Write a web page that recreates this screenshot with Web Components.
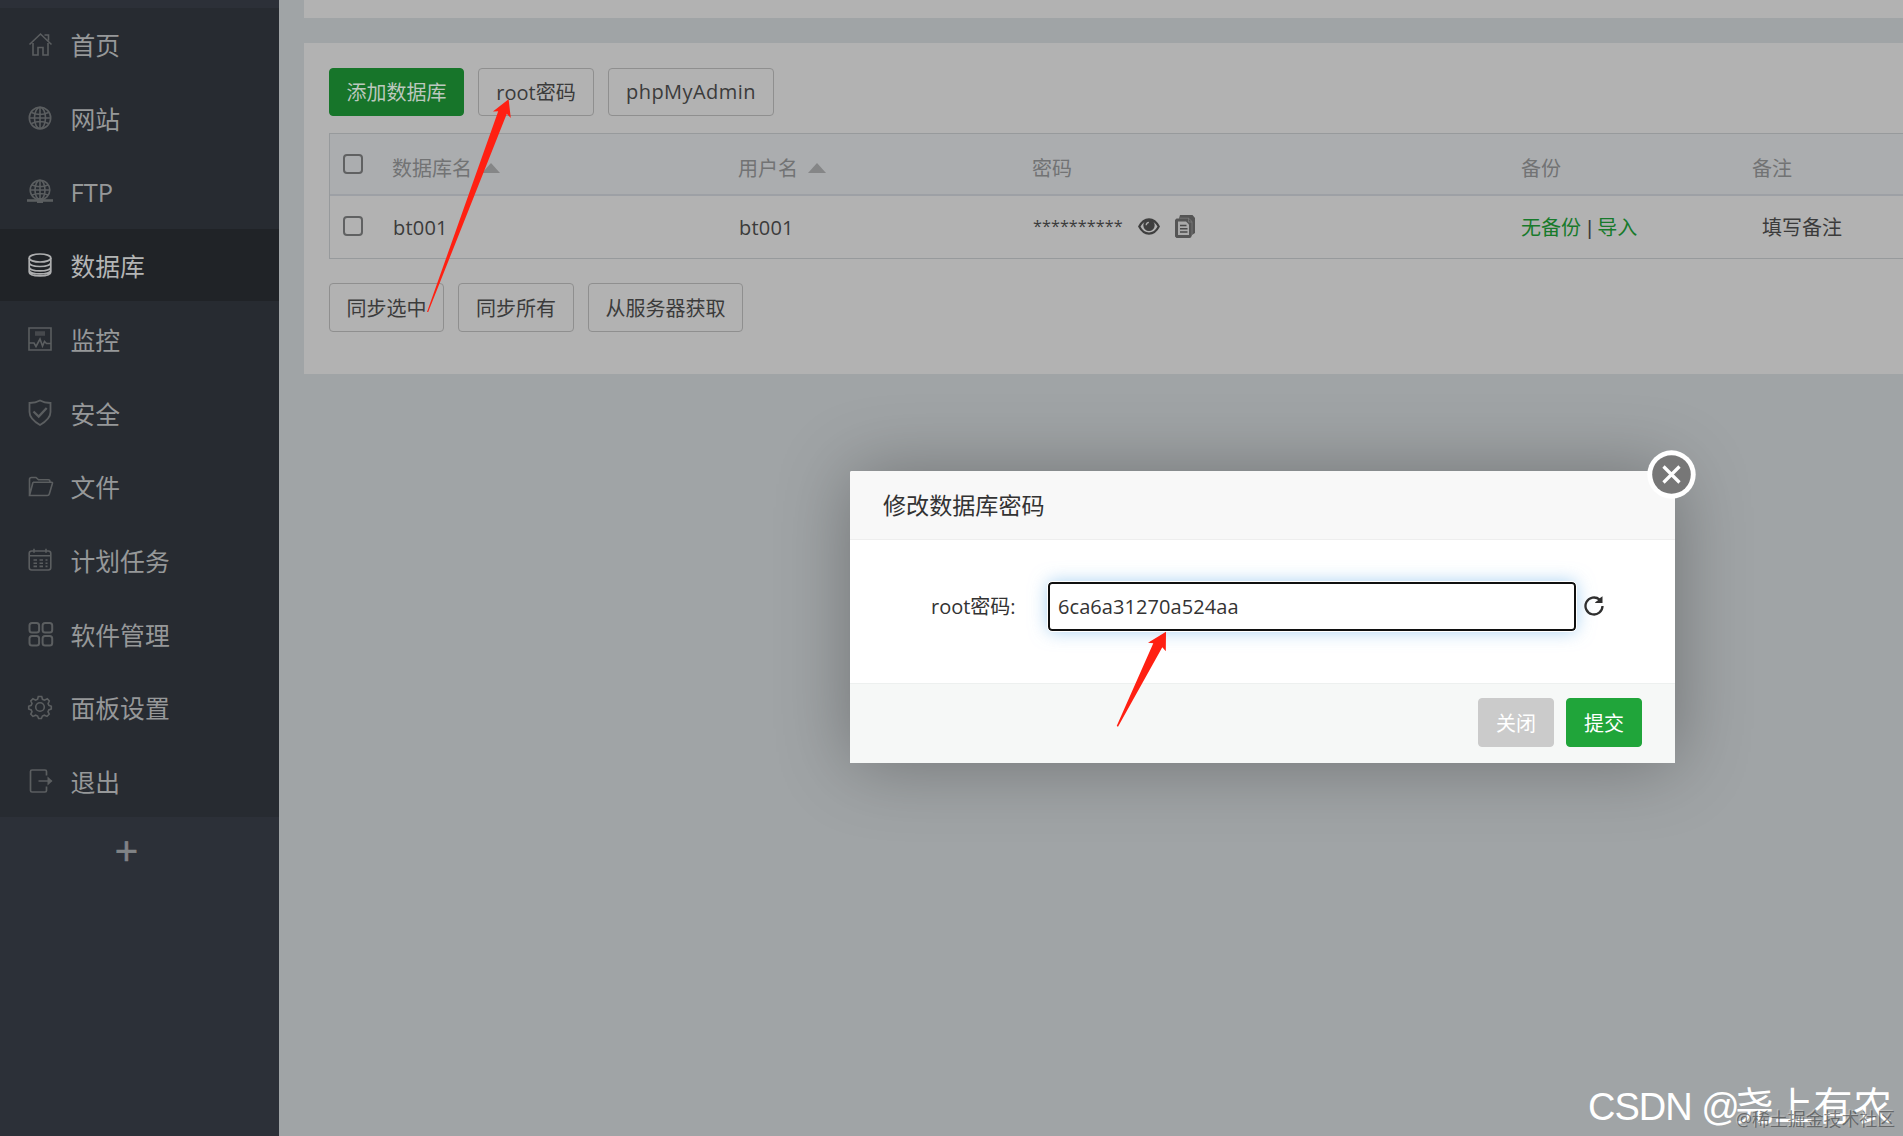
<!DOCTYPE html>
<html lang="zh-CN">
<head>
<meta charset="utf-8">
<title>数据库</title>
<style>
html,body{margin:0;height:100%;overflow:hidden}
body{font-family:"Open Sans","Noto Sans CJK SC",sans-serif;font-size:20px;color:#3b3b3b}
</style>
</head>
<body>
<panel-app></panel-app>
<script>
const define = (name, css, html) => customElements.define(name, class extends HTMLElement {
  constructor() {
    super();
    this.attachShadow({mode: 'open'}).innerHTML = `<style>*{box-sizing:border-box}${css}</style>${typeof html === 'function' ? html(this) : html}`;
  }
});

const icons = {
  home: '<path d="M1.500 12.500 12.500 2l11 10.500M5 11v12h5v-7.500h5V23h5V11M16.500 3h4v5.500"/>',
  globe: '<circle cx="12" cy="12" r="10.700"/><ellipse cx="12" cy="12" rx="5.500" ry="10.700"/><path d="M12 1.300v21.400M1.300 12h21.400M3.500 6.500q8.500 4 17 0M3.500 17.500q8.500-4 17 0"/>',
  ftp: '<circle cx="12" cy="11" r="9.800"/><ellipse cx="12" cy="11" rx="5" ry="9.800"/><path d="M12 1.200v19.600M2.200 11h19.600M4 6q8 3.500 16 0M4 16q8-3 16 0"/><path d="M-1 21.500h26" stroke-width="2.600"/><path d="M9 21.500h6" stroke-width="5"/>',
  db: '<g stroke-width="1.700"><ellipse cx="12" cy="5" rx="10.800" ry="4"/><path d="M1.200 5v14c0 5.300 21.600 5.300 21.600 0V5M1.200 9.500c0 5.300 21.600 5.300 21.600 0M1.200 14c0 5.300 21.600 5.300 21.600 0M1.200 17c0 5.300 21.600 5.300 21.600 0"/></g>',
  monitor: '<path d="M1 1h22v22H1zM1 16h5l2 3.500 4-7.500 2.500 7 2-4.500 2 2H23"/><path d="M7 6.500h10" stroke-width="4.500" opacity=".6"/>',
  shield: '<path stroke-width="1.800" d="M12 .5C8.500 2.500 5 3 1.500 3v9c0 6 4.500 9.500 10.500 13 6-3.500 10.500-7 10.500-13V3C19 3 15.500 2.500 12 .5Z"/><path stroke-width="2.300" d="m5.500 11.500 5.200 5 8-8.500"/>',
  folder: '<path d="M1.500 21V5.500Q1.500 3.500 3.500 3.500H8l2.500 2.300h10q1.500 0 1.500 2.400M5 8.200h18.500q1.300 0 .9 1.300L21.300 20q-.4 1.500-2 1.500H1.500L5 8.200"/>',
  calendar: '<rect x="1.200" y="3" width="21.600" height="19" rx="2.500"/><path d="M1.200 7.800h21.600M6 .8v4M18 .8v4"/><path stroke-dasharray="3.500 2.500" d="M5.500 12h14M5.500 15.200h14M5.500 18.400h14"/>',
  apps: '<g stroke-width="2"><rect x="1.500" y="1" width="9.600" height="9.600" rx="2.500"/><rect x="14.600" y="1" width="9.600" height="9.600" rx="2.500"/><rect x="1.500" y="14" width="9.600" height="9.600" rx="2.500"/><rect x="14.600" y="14" width="9.600" height="9.600" rx="2.500"/></g>',
  gear: '<circle cx="12" cy="12" r="4.300"/><path d="m10.300 1.500h3.400l.8 2.800 2 .9 2.800-1.500 2 2.300-1.200 2.800.8 1.500 2.400 1v2.600l-2.500 1-.8 1.800 1.200 2.500-2.200 2.200-2.600-1.200-2 .8-1 2.500h-2.800l-1-2.500-2-.8-2.700 1.200-2.100-2.200 1.200-2.500-.8-1.800-2.500-1v-2.600l2.500-1 .8-1.800-1.200-2.500 2.100-2.200 2.700 1.400 2-.9Z"/>',
  exit: '<path stroke-width="1.700" d="M18.500 6.500V2.500Q18.500 1 17 1H4Q2.500 1 2.500 2.500v19Q2.500 23 4 23h13q1.500 0 1.500-1.500v-4M10.500 12h13"/><path fill="#5b5e60" stroke="none" d="m19.500 7.500 5 4.500-5 4.500Z"/>'
};

define('menu-item', `
:host{display:flex;align-items:center;height:72px;margin-bottom:1.700px;padding:3px 0 0 28px;font-size:24.800px;color:#969899;line-height:1}
:host([active]){background:#202327;color:#b4b5b5}
svg{width:26px;height:26px;flex:none;overflow:visible;fill:none;stroke:#5b5e60;stroke-width:1.600;margin:-1px 16.500px 0 0}
:host([active]) svg{stroke:#aeafb0}
:host([icon=ftp]) span{font-size:25.500px}`,
el => `<svg viewBox="0 0 26 26">${icons[el.getAttribute('icon')]}</svg><span><slot></slot></span>`);

define('side-bar', `
:host{display:block;width:279px;height:1136px;flex:none;background:#2c3038;padding-top:8px}
nav{background:#272b31;height:809px;overflow:hidden}
.add{height:72px;width:253px;text-align:center;color:#808386;font:400 41px/66px "Open Sans",sans-serif;-webkit-text-stroke:.7px #808386}`,
`<nav>
<menu-item icon="home">首页</menu-item><menu-item icon="globe">网站</menu-item><menu-item icon="ftp">FTP</menu-item>
<menu-item icon="db" active>数据库</menu-item><menu-item icon="monitor">监控</menu-item><menu-item icon="shield">安全</menu-item>
<menu-item icon="folder">文件</menu-item><menu-item icon="calendar">计划任务</menu-item><menu-item icon="apps">软件管理</menu-item>
<menu-item icon="gear">面板设置</menu-item><menu-item icon="exit">退出</menu-item>
</nav><div class="add">+</div>`);

define('bt-button', `
:host{display:flex;align-items:center;justify-content:center;height:48px;border:1px solid #8f8f8f;border-radius:4px;padding-top:1px;color:#3b3b3b;font-size:20px;line-height:1;white-space:nowrap;flex:none}
:host([kind=dim]){background:#17752a;border-color:#17752a;color:#bcc8be}
:host([kind=primary]){background:#20a53a;border-color:#20a53a;color:#fff}
:host([kind=cancel]){background:#cbcbcb;border-color:#cbcbcb;color:#fff}`,
`<slot></slot>`);

define('sort-label', `
:host{display:flex;align-items:center;gap:10px}
i{width:0;height:0;border:9px solid transparent;border-top:0;border-bottom:10px solid #858687;margin-top:-3px}`,
`<slot></slot><i></i>`);

define('check-box', `
:host{display:block;width:20px;height:20px;border:2px solid #606162;border-radius:4px;margin-top:-3px}`, ``);

define('db-table', `
:host{display:block;border:1px solid #979a9c;border-right:0;height:126px}
.r{display:grid;grid-template-columns:62px 346px 294px 489px 231px 1fr;align-items:center;height:61px;line-height:1}
.h{background:#abadaf;border-bottom:2px solid #9da0a5;color:#727374;height:62px}
.h>*{position:relative;top:5px}
.h>check-box{top:1px}
check-box{margin-left:13px}
.row{height:62px;padding-top:1px}
.pw{display:flex;align-items:center;margin-top:-2px}
.stars{font-size:16.300px;width:105px;margin-left:1px;white-space:nowrap;margin-top:-1px}
.lat{letter-spacing:.2px;padding-left:1px}
.g{color:#177a2b}
.sep{margin:0 5px 0 6px}
.note{padding-left:10px}
svg{display:block;overflow:visible}`,
`<div class="r h"><check-box></check-box><sort-label>数据库名</sort-label><sort-label>用户名</sort-label><span>密码</span><span>备份</span><span>备注</span></div>
<div class="r row"><check-box></check-box><span class="lat">bt001</span><span class="lat">bt001</span>
<span class="pw"><span class="stars">**********</span>
<svg width="22" height="17" viewBox="0 0 22 17"><path fill="#3f3f3f" fill-rule="evenodd" d="M0 8.500Q4.200.3 11 .3t11 8.200Q17.800 16.700 11 16.700T0 8.500Zm2.500 0Q5.500 14.400 11 14.400t8.500-5.900Q18 5.500 15.500 3.900a5.700 5.700 0 1 1-9 0Q4 5.500 2.500 8.500Z"/><path d="M8.200 7.200a3 3 0 0 1 2.700-2.800" fill="none" stroke="#aaa" stroke-width="1.400"/></svg>
<svg style="margin-left:15px" width="20" height="23" viewBox="0 0 20 23"><path fill="#555" d="M5 0h12.500L20 3v15l-3 2-1 2.500-1.500.5H1.500L0 21.500V5l1.500-1.500H4Z"/><path fill="none" stroke="#7b7b7b" stroke-width=".8" d="M4.500 3.200h9L17 6.500V20M13.500 3v4H17"/><path fill="#aaa" d="M3 6.500h8l3 3V20H3Z"/><path stroke="#4a4a4a" stroke-width="1.400" d="M5 10.500h6.500M5 13.700h7.500M5 17h7.500"/></svg></span>
<span><span class="g">无备份</span><span class="sep" style="font-family:'Liberation Sans'">|</span><span class="g">导入</span></span><span class="note">填写备注</span></div>`);

define('page-content', `
:host{display:flex;flex-direction:column;flex:1;min-width:0;background:#a0a4a6;padding-left:25px}
.top{height:18px;background:#b2b2b2;margin-bottom:25px}
.card{height:331px;background:#b2b2b2;padding:25px 0 0 25px;overflow:hidden}
.bar{display:flex;gap:14px}
.php{letter-spacing:.45px;margin-top:-2px}
db-table{margin:17px 0 24px}
.low bt-button{height:49px;padding-top:2px}`,
`<div class="top"></div><div class="card">
<div class="bar"><bt-button kind="dim" style="width:135px">添加数据库</bt-button><bt-button style="width:116px">root密码</bt-button><bt-button style="width:166px"><span class="php">phpMyAdmin</span></bt-button></div>
<db-table></db-table>
<div class="bar low"><bt-button style="width:115px">同步选中</bt-button><bt-button style="width:116px">同步所有</bt-button><bt-button style="width:155px">从服务器获取</bt-button></div>
</div>`);

define('password-dialog', `
:host{position:absolute;left:850px;top:471px;width:825px;height:292px;background:#fff;border-radius:2px;box-shadow:1px 1px 75px rgba(0,0,0,.3);display:flex;flex-direction:column;color:#333}
header{height:69px;background:#f8f8f8;border-bottom:1px solid #eee;padding-left:33px;font-size:23.100px;line-height:69px;border-radius:2px 2px 0 0}
main{flex:1;display:flex;align-items:flex-start;padding:42px 0 0 81px}
label{width:117px;line-height:50px;white-space:nowrap}
input{width:528px;height:49px;border:2px solid #101010;border-radius:4px;outline:1px solid #fff;padding:0 0 0 8px;font:20px "Open Sans",sans-serif;letter-spacing:.07px;color:#333;box-shadow:0 0 18px rgba(102,175,233,.6);background:#fff}
.re{margin:14px 0 0 8px}
footer{height:80px;background:#f6f8f7;border-top:1px solid #edf0ef;display:flex;justify-content:flex-end;gap:12px;padding:14px 33px 0 0}
bt-button{width:76px;height:49px;padding-top:2px}
.x{position:absolute;right:-21px;top:-21px}`,
`<header>修改数据库密码</header>
<main><label>root密码:</label><input value="6ca6a31270a524aa"><svg class="re" width="20" height="20" viewBox="0 0 20 20"><path d="M15.600 3.600A8.500 8.500 0 1 0 18.500 10" fill="none" stroke="#2f2f2f" stroke-width="2.300"/><path fill="#2f2f2f" d="M18.500.3v6.800h-7.300v-.8l2.500-1.800 2.300-2.600Z"/></svg></main>
<footer><bt-button kind="cancel">关闭</bt-button><bt-button kind="primary">提交</bt-button></footer>
<svg class="x" width="49" height="49" viewBox="0 0 49 49"><circle cx="24.500" cy="24.500" r="24.200" fill="#fff"/><circle cx="24.500" cy="24.500" r="19.300" fill="#777"/><path d="m16.500 16.500 16 16m0-16-16 16" stroke="#fff" stroke-width="3.200"/></svg>`);

define('pointer-arrows', `
:host{position:absolute;inset:0;pointer-events:none}svg{display:block}`,
`<svg width="1903" height="1136" fill="#ff2012"><path d="M508.600 99.300 492.900 111.500l5.300-.2L427 312h1.200L506.800 113.700l4 4.300Z"/><path d="M1166 631.700 1148 642.700l5.300.6L1116.700 726l1.300.8L1162.300 647.300l3.500 4Z"/></svg>`);

define('water-marks', `
:host{position:absolute;left:1587px;top:1081px;width:316px;height:55px;overflow:hidden;display:block;white-space:nowrap;line-height:1}
.a{color:#fff;font:39px/52px "Liberation Sans","Noto Sans CJK SC",sans-serif;display:flex}
.l{font-size:38px;letter-spacing:-1px;width:147px;padding-left:1px;margin-right:1px}
.z{letter-spacing:.3px}
.b{position:absolute;left:149px;top:30px;font-size:17.900px;color:rgba(60,60,60,.62);text-shadow:-1px -1px 1px rgba(255,255,255,.35)}`,
`<span class="a"><span class="l">CSDN @</span><span class="z">尧上有农</span></span><span class="b">@稀土掘金技术社区</span>`);

define('panel-app', `:host{display:flex;position:relative;width:1903px;height:1136px;overflow:hidden}`,
`<side-bar></side-bar><page-content></page-content><password-dialog></password-dialog><pointer-arrows></pointer-arrows><water-marks></water-marks>`);
</script>
</body>
</html>
